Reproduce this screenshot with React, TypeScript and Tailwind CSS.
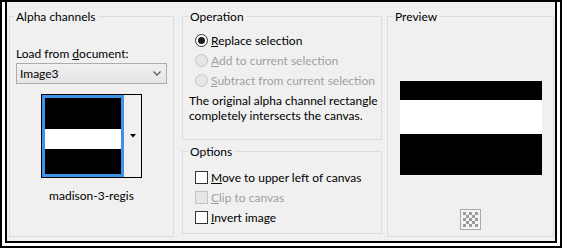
import React from 'react';

const Radio = ({ checked, disabled }: { checked?: boolean; disabled?: boolean }) => (
  <span
    className={`flex h-[13px] w-[13px] shrink-0 items-center justify-center rounded-full border ${
      disabled ? 'border-[#c4c4c4] bg-[#e6e6e6]' : 'border-[#333] bg-white'
    }`}
  >
    {checked && <span className="h-[7px] w-[7px] rounded-full bg-[#1a1a1a]" />}
  </span>
);

const Check = ({ disabled }: { disabled?: boolean }) => (
  <span
    className={`block h-[13px] w-[13px] shrink-0 border ${
      disabled ? 'border-[#c4c4c4] bg-[#e6e6e6]' : 'border-[#333] bg-white'
    }`}
  />
);

const Row = ({ children, disabled }: { children: React.ReactNode; disabled?: boolean }) => (
  <div className={`flex items-center gap-[3px] whitespace-nowrap pl-[12px] ${disabled ? 'text-[#a0a0a0]' : 'text-black'}`}>
    {children}
  </div>
);

export default function App() {
  return (
    <div className="h-[249px] w-[562px] bg-white font-['Lato','Liberation_Sans',sans-serif] text-[12px] leading-[15px] text-black">
      <div className="h-[248px] border-2 border-black px-[3px] pb-[3px]">
        <div className="flex h-full items-start border-2 border-t-0 border-black bg-[#f0f0f0] pl-[2px] pt-[7px]">
          {/* Alpha channels */}
          <fieldset className="h-[228px] w-[165px] border border-[#dcdcdc]">
            <legend className="ml-[4px] px-[2px]">Alpha channels</legend>
            <div className="mt-[22px] pl-[6px]">
              Load from <u>d</u>ocument:
            </div>
            <div className="ml-[6px] mt-[2px] flex h-[21px] w-[151px] items-center justify-between border border-[#acacac] bg-gradient-to-b from-[#f0f0f0] to-[#e5e5e5] pl-[3px] pr-[5px]">
              <span>Image3</span>
              <svg width="8" height="5" viewBox="0 0 8 5">
                <polyline points="0.5,0.5 4,4 7.5,0.5" fill="none" stroke="#606060" strokeWidth="1.3" />
              </svg>
            </div>
            <div className="mt-[10px] flex justify-center">
              <div className="flex h-[84px] w-[101px] border border-black">
                <div className="h-full w-[82px] border-[3px] border-[#3c94e8] bg-black">
                  <div className="mt-[31px] h-[20px] bg-white" />
                </div>
                <div className="flex flex-1 items-center justify-center bg-[#f0f0f0]">
                  <svg width="6" height="4" viewBox="0 0 6 4">
                    <polygon points="0,0 6,0 3,3.5" fill="#000" />
                  </svg>
                </div>
              </div>
            </div>
            <div className="mt-[10px] text-center">madison-3-regis</div>
          </fieldset>

          {/* Operation / Options */}
          <div className="ml-[8px] flex w-[200px] flex-col">
            <fieldset className="h-[131px] border border-[#dcdcdc]">
              <legend className="ml-[5px] px-[2px]">Operation</legend>
              <div className="mt-[9px] flex flex-col gap-[5px]">
                <Row>
                  <Radio checked />
                  <span>
                    <u>R</u>eplace selection
                  </span>
                </Row>
                <Row disabled>
                  <Radio disabled />
                  <span>
                    <u>A</u>dd to current selection
                  </span>
                </Row>
                <Row disabled>
                  <Radio disabled />
                  <span>
                    <u>S</u>ubtract from current selection
                  </span>
                </Row>
              </div>
              <p className="mt-[5px] whitespace-nowrap pl-[6px]">
                The original alpha channel rectangle
                <br />
                completely intersects the canvas.
              </p>
            </fieldset>
            <fieldset className="mt-[4px] h-[90px] border border-[#dcdcdc]">
              <legend className="ml-[5px] px-[2px]">Options</legend>
              <div className="mt-[11px] flex flex-col gap-[5px]">
                <Row>
                  <Check />
                  <span>
                    <u>M</u>ove to upper left of canvas
                  </span>
                </Row>
                <Row disabled>
                  <Check disabled />
                  <span>
                    <u>C</u>lip to canvas
                  </span>
                </Row>
                <Row>
                  <Check />
                  <span>
                    <u>I</u>nvert image
                  </span>
                </Row>
              </div>
            </fieldset>
          </div>

          {/* Preview */}
          <fieldset className="ml-[5px] h-[228px] w-[167px] border border-[#dcdcdc]">
            <legend className="ml-[5px] px-[2px]">Preview</legend>
            <div className="mt-[57px] flex justify-center">
              <div className="w-[142px]">
                <div className="h-[19px] bg-black" />
                <div className="h-[34px] bg-white" />
                <div className="h-[41px] bg-black" />
              </div>
            </div>
            <div className="mt-[34px] flex justify-center">
              <svg width="21" height="21" viewBox="0 0 21 21">
                <rect x="0.5" y="0.5" width="20" height="20" fill="#f4f4f4" stroke="#a8a8a8" />
                <g fill="#9c9c9c">
                  <rect x="3" y="3" width="3" height="3" />
                  <rect x="9" y="3" width="3" height="3" />
                  <rect x="15" y="3" width="3" height="3" />
                  <rect x="6" y="6" width="3" height="3" />
                  <rect x="12" y="6" width="3" height="3" />
                  <rect x="3" y="9" width="3" height="3" />
                  <rect x="9" y="9" width="3" height="3" />
                  <rect x="15" y="9" width="3" height="3" />
                  <rect x="6" y="12" width="3" height="3" />
                  <rect x="12" y="12" width="3" height="3" />
                  <rect x="3" y="15" width="3" height="3" />
                  <rect x="9" y="15" width="3" height="3" />
                  <rect x="15" y="15" width="3" height="3" />
                </g>
              </svg>
            </div>
          </fieldset>
        </div>
      </div>
    </div>
  );
}
